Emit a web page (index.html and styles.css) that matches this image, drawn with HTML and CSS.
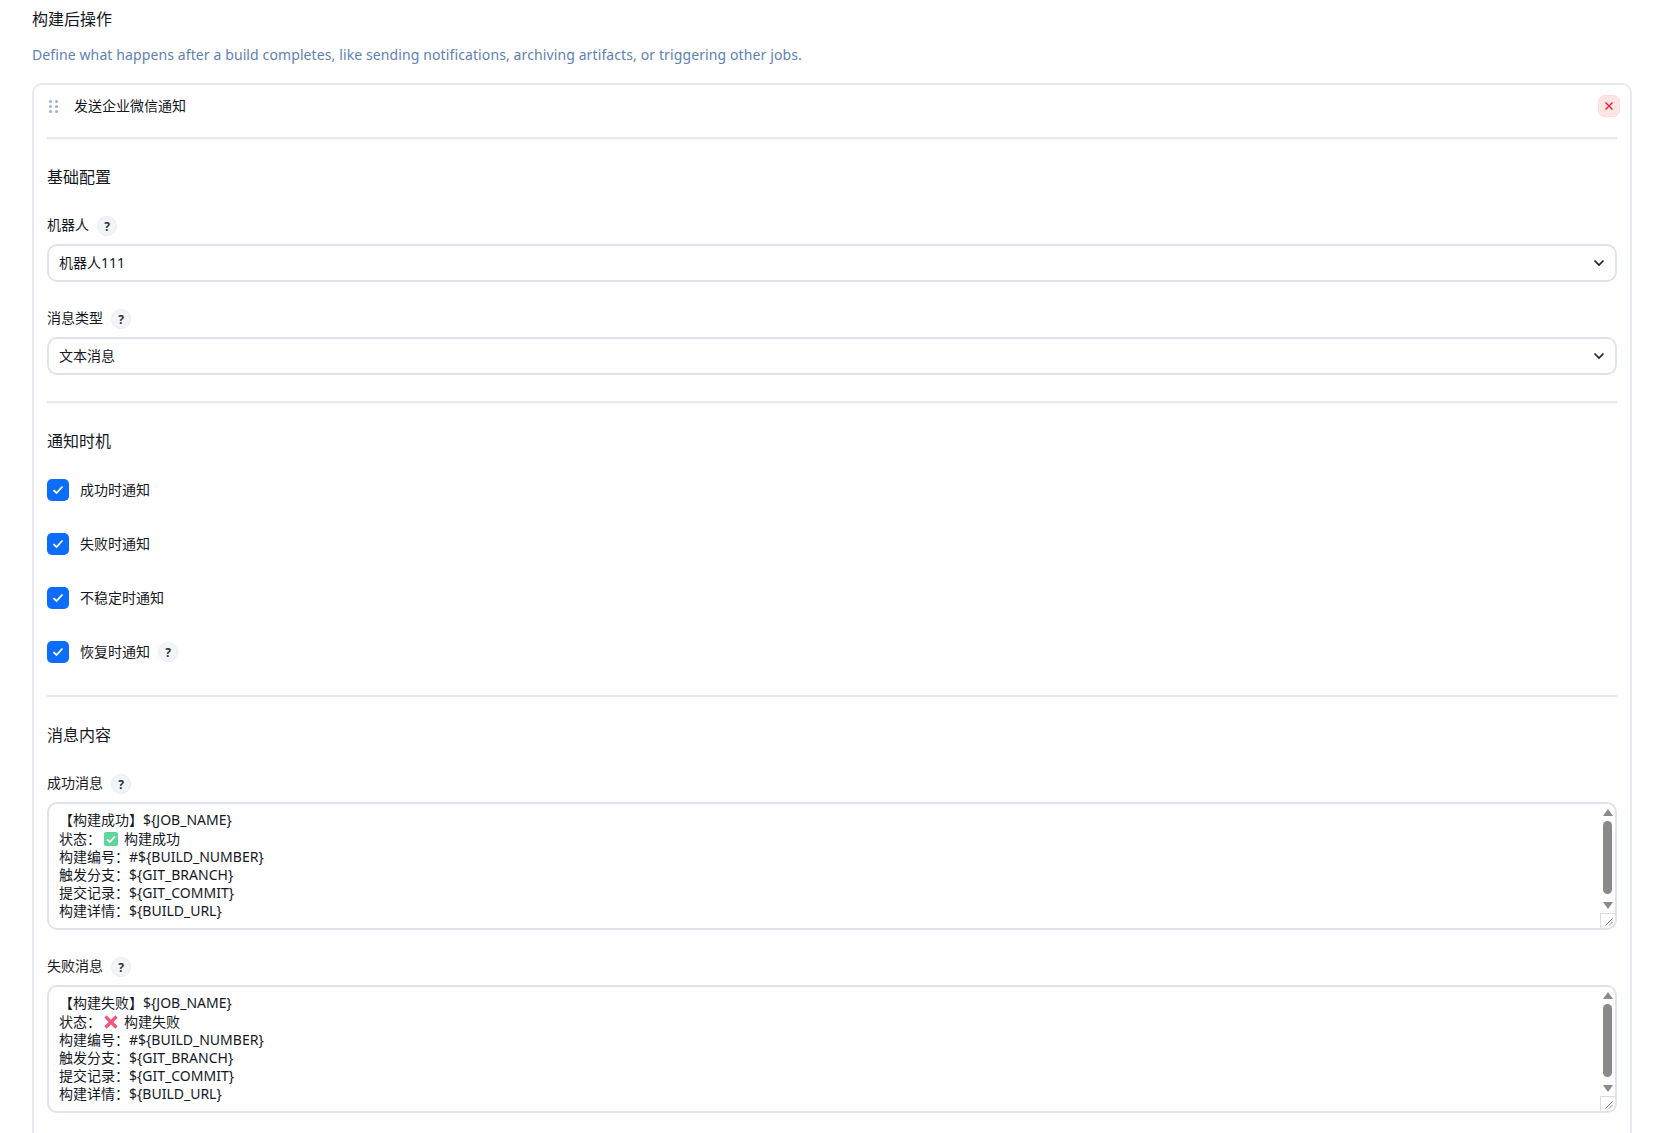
FILE: index.html
```html
<!DOCTYPE html>
<html lang="zh-CN">
<head>
<meta charset="utf-8">
<title>构建后操作</title>
<link rel="stylesheet" href="styles.css">
</head>
<body>
<main class="page">
  <h1 class="title">构建后操作</h1>
  <p class="desc">Define what happens after a build completes, like sending notifications, archiving artifacts, or triggering other jobs.</p>
  <section class="card">
    <header class="card-head">
      <svg class="drag" width="9" height="13" viewBox="0 0 9 13"><g fill="#9fb0c9"><circle cx="1.5" cy="1.5" r="1.5"/><circle cx="7.5" cy="1.5" r="1.5"/><circle cx="1.5" cy="6.5" r="1.5"/><circle cx="7.5" cy="6.5" r="1.5"/><circle cx="1.5" cy="11.5" r="1.5"/><circle cx="7.500" cy="11.5" r="1.5"/></g></svg>
      <span class="card-name">发送企业微信通知</span>
      <button class="close" type="button"><svg width="10" height="10" viewBox="0 0 10 10"><path d="M1.5 1.5l7 7M8.5 1.5l-7 7" stroke="#e6192e" stroke-width="1.4" fill="none"/></svg></button>
    </header>

    <div class="group">
      <h2 class="section">基础配置</h2>
      <div class="label"><span class="field-name">机器人</span><i class="help">?</i></div>
      <div class="select"><span class="value">机器人111</span><svg width="12" height="8" viewBox="0 0 12 8"><path d="M1.5 1.5L6 6l4.5-4.5" stroke="#1b2230" stroke-width="1.7" fill="none"/></svg></div>
      <div class="label"><span class="field-name">消息类型</span><i class="help">?</i></div>
      <div class="select"><span class="value">文本消息</span><svg width="12" height="8" viewBox="0 0 12 8"><path d="M1.5 1.5L6 6l4.5-4.5" stroke="#1b2230" stroke-width="1.7" fill="none"/></svg></div>
    </div>

    <div class="group">
      <h2 class="section">通知时机</h2>
      <div class="checks">
        <label class="check"><span class="box"><svg width="12" height="10" viewBox="0 0 12 10"><path d="M1.5 5.2L4.5 8l6-6.5" stroke="#fff" stroke-width="1.8" fill="none"/></svg></span><span class="check-name">成功时通知</span></label>
        <label class="check"><span class="box"><svg width="12" height="10" viewBox="0 0 12 10"><path d="M1.5 5.2L4.5 8l6-6.5" stroke="#fff" stroke-width="1.8" fill="none"/></svg></span><span class="check-name">失败时通知</span></label>
        <label class="check"><span class="box"><svg width="12" height="10" viewBox="0 0 12 10"><path d="M1.5 5.2L4.5 8l6-6.5" stroke="#fff" stroke-width="1.8" fill="none"/></svg></span><span class="check-name">不稳定时通知</span></label>
        <label class="check"><span class="box"><svg width="12" height="10" viewBox="0 0 12 10"><path d="M1.5 5.2L4.5 8l6-6.5" stroke="#fff" stroke-width="1.8" fill="none"/></svg></span><span class="check-name">恢复时通知</span><i class="help">?</i></label>
      </div>
    </div>

    <div class="group last">
      <h2 class="section">消息内容</h2>
      <div class="label"><span class="field-name">成功消息</span><i class="help">?</i></div>
      <div class="area">
        <div class="area-text">
          <div>【构建成功】${JOB_NAME}</div>
          <div class="emoji-line">状态：<svg class="emoji" width="14" height="14" viewBox="0 0 14 14"><rect width="14" height="14" rx="2" fill="#5cd69a"/><path d="M3 7.3l2.8 2.7L11 4.4" stroke="#fff" stroke-width="1.8" fill="none"/></svg>构建成功</div>
          <div>构建编号：#${BUILD_NUMBER}</div>
          <div>触发分支：${GIT_BRANCH}</div>
          <div>提交记录：${GIT_COMMIT}</div>
          <div>构建详情：${BUILD_URL}</div>
        </div>
        <div class="scroll">
          <svg class="arrow" width="10" height="7" viewBox="0 0 10 7"><path d="M5 0l5 7H0z" fill="#8a8a8a"/></svg>
          <span class="thumb"></span>
          <svg class="arrow" width="10" height="7" viewBox="0 0 10 7"><path d="M5 7L0 0h10z" fill="#8a8a8a"/></svg>
        </div>
        <div class="grip"><svg width="8" height="8" viewBox="0 0 8 8"><path d="M0.5 7.500l7-7M4 7.500l3.500-3.500" stroke="#666" stroke-width="0.8" fill="none"/></svg></div>
      </div>
      <div class="label"><span class="field-name">失败消息</span><i class="help">?</i></div>
      <div class="area">
        <div class="area-text">
          <div>【构建失败】${JOB_NAME}</div>
          <div class="emoji-line">状态：<svg class="emoji" width="14" height="14" viewBox="0 0 14 14"><path d="M1.500 1.500l11 11M12.500 1.500l-11 11" stroke="#f0567a" stroke-width="3.200" fill="none"/></svg>构建失败</div>
          <div>构建编号：#${BUILD_NUMBER}</div>
          <div>触发分支：${GIT_BRANCH}</div>
          <div>提交记录：${GIT_COMMIT}</div>
          <div>构建详情：${BUILD_URL}</div>
        </div>
        <div class="scroll">
          <svg class="arrow" width="10" height="7" viewBox="0 0 10 7"><path d="M5 0l5 7H0z" fill="#8a8a8a"/></svg>
          <span class="thumb"></span>
          <svg class="arrow" width="10" height="7" viewBox="0 0 10 7"><path d="M5 7L0 0h10z" fill="#8a8a8a"/></svg>
        </div>
        <div class="grip"><svg width="8" height="8" viewBox="0 0 8 8"><path d="M0.5 7.500l7-7M4 7.500l3.500-3.500" stroke="#666" stroke-width="0.8" fill="none"/></svg></div>
      </div>
    </div>
  </section>
</main>
</body>
</html>
```
FILE: styles.css
```css
* { box-sizing: border-box; }
html, body { margin: 0; height: 100%; }
body {
  background: #fff;
  color: #14181f;
  font-family: "Noto Sans", "Noto Sans CJK SC", sans-serif;
  font-size: 14px;
  overflow: hidden;
}
.page { padding: 8px 25px 0 32px; height: 1133px; overflow: hidden; }
.title { margin: 0; font-size: 16px; font-weight: 400; line-height: 22px; }
.desc { margin: 13px 0 0; font-size: 14px; letter-spacing: 0.11px; line-height: 24px; color: #5d82b5; }
.card {
  margin-top: 16px;
  border: 2px solid #e6e9f3;
  border-bottom: 0;
  border-radius: 10px 10px 0 0;
  padding: 0 13px;
  height: 1100px;
}
.card-head {
  display: flex;
  align-items: center;
  height: 54px;
  border-bottom: 2px solid #e6e9f3;
  padding: 0 0 10px 2px;
}
.drag { flex: none; }
.card-name { margin: 0 0 2px 16px; font-size: 14px; }
.close {
  margin-left: auto;
  margin-right: -3px;
  width: 22px; height: 22px;
  padding: 0;
  border: 1px solid #ffd9dc;
  border-radius: 7px;
  background: #ffe3e5;
  display: flex; align-items: center; justify-content: center;
}
.group { padding: 26px 0; border-bottom: 2px solid #e6e9f3; }
.group + .group { padding-bottom: 32px; }
.group.last { border-bottom: 0; }
.section { margin: 0; font-size: 16px; font-weight: 400; line-height: 24px; }
.label { display: flex; align-items: center; gap: 8px; margin-top: 27px; height: 20px; font-size: 14px; }
.field-name { margin-bottom: 4px; }
.check-name { margin-bottom: 2px; }
.help {
  width: 20px; height: 20px; border-radius: 50%;
  border: 1px solid #e9ecf1;
  background: #f2f4f7;
  display: flex; align-items: center; justify-content: center;
  font-style: normal; font-weight: 700; font-size: 12px; color: #2a3140;
}
.select {
  display: flex; align-items: center; justify-content: space-between;
  margin-top: 8px;
  height: 38px;
  border: 2px solid #dfe3ee;
  border-radius: 10px;
  padding: 0 10px;
  font-size: 14px;
}
.value { margin-bottom: 2px; }
.checks { display: flex; flex-direction: column; gap: 32px; margin-top: 26px; }
.check { display: flex; align-items: center; height: 22px; font-size: 14px; }
.check .help { margin-left: 8px; }
.box {
  width: 22px; height: 22px; margin-right: 11px;
  border-radius: 5px; background: #0b6dfa;
  display: flex; align-items: center; justify-content: center;
}
.area {
  position: relative;
  margin-top: 8px;
  height: 128px;
  border: 2px solid #dfe3ee;
  border-radius: 10px;
  padding: 7px 10px;
  font-size: 14px;
  line-height: 18px;
}
.emoji-line { height: 19px; padding-top: 1px; }
.emoji { vertical-align: -2px; margin: 0 6px 0 3px; }
.scroll {
  position: absolute; top: 5px; right: 0; width: 15px;
  display: flex; flex-direction: column; align-items: center; gap: 5px;
}
.arrow { flex: none; }
.thumb { width: 9px; height: 73px; margin-bottom: 3px; border-radius: 5px; background: #8a8a8a; }
.grip {
  position: absolute; right: 0; bottom: 0; width: 15px; height: 15px;
  border: 1px solid #dcdcdc; border-right: 0; border-bottom: 0;
  background: #fff; border-bottom-right-radius: 8px;
  display: flex; align-items: flex-end; justify-content: flex-end; padding: 0 2px 2px 0;
}
```
